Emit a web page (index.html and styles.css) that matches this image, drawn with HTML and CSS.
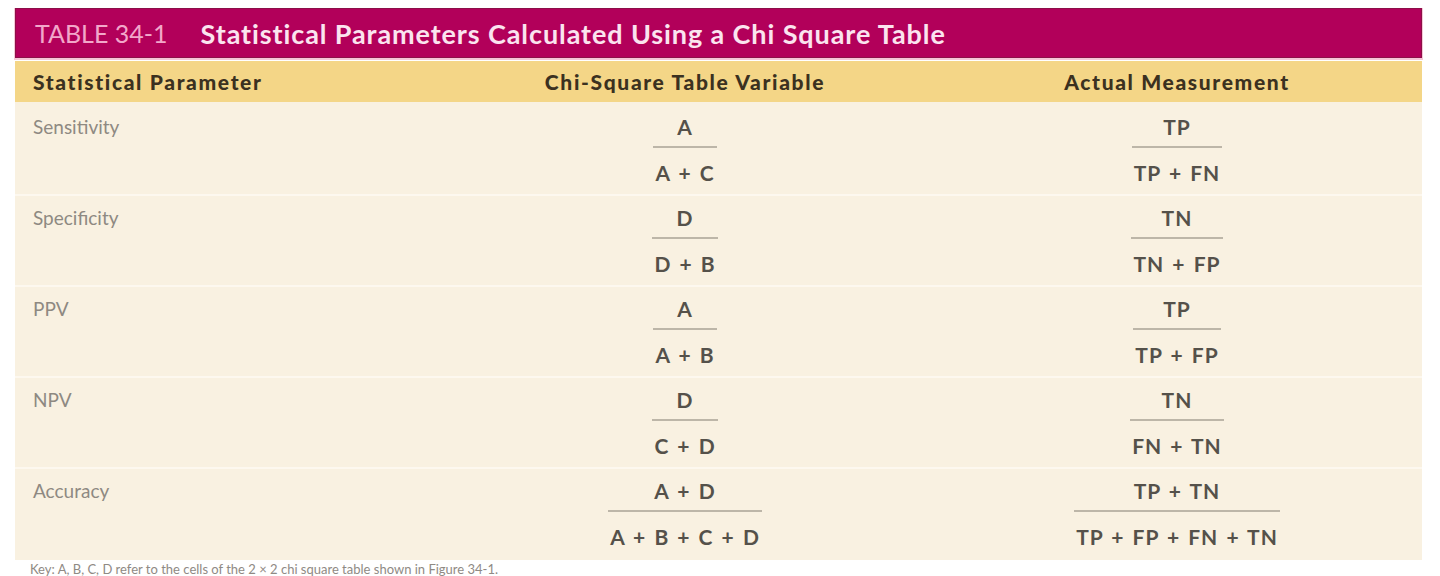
FILE: index.html
```html
<!DOCTYPE html>
<html>
<head>
<meta charset="utf-8">
<link rel="stylesheet" href="styles.css">
</head>
<body>
<div class="table">
  <div class="title-bar">
    <span class="table-no">TABLE 34-1</span>
    <span class="table-title">Statistical Parameters Calculated Using a Chi Square Table</span>
  </div>
  <div class="head-row">
    <div class="cell c1">Statistical Parameter</div>
    <div class="cell c2">Chi-Square Table Variable</div>
    <div class="cell c3">Actual Measurement</div>
  </div>
  <div class="body">
    <div class="row">
      <div class="cell c1 label">Sensitivity</div>
      <div class="cell c2"><div class="frac"><span class="num">A</span><span class="den">A + C</span></div></div>
      <div class="cell c3"><div class="frac"><span class="num">TP</span><span class="den">TP + FN</span></div></div>
    </div>
    <div class="row">
      <div class="cell c1 label">Specificity</div>
      <div class="cell c2"><div class="frac"><span class="num">D</span><span class="den">D + B</span></div></div>
      <div class="cell c3"><div class="frac"><span class="num">TN</span><span class="den">TN + FP</span></div></div>
    </div>
    <div class="row">
      <div class="cell c1 label">PPV</div>
      <div class="cell c2"><div class="frac"><span class="num">A</span><span class="den">A + B</span></div></div>
      <div class="cell c3"><div class="frac"><span class="num">TP</span><span class="den">TP + FP</span></div></div>
    </div>
    <div class="row">
      <div class="cell c1 label">NPV</div>
      <div class="cell c2"><div class="frac"><span class="num">D</span><span class="den">C + D</span></div></div>
      <div class="cell c3"><div class="frac"><span class="num">TN</span><span class="den">FN + TN</span></div></div>
    </div>
    <div class="row last">
      <div class="cell c1 label">Accuracy</div>
      <div class="cell c2"><div class="frac"><span class="num">A + D</span><span class="den">A + B + C + D</span></div></div>
      <div class="cell c3"><div class="frac"><span class="num">TP + TN</span><span class="den">TP + FP + FN + TN</span></div></div>
    </div>
  </div>
</div>
<p class="footnote">Key: A, B, C, D refer to the cells of the 2 × 2 chi square table shown in Figure 34-1.</p>
</body>
</html>
```

FILE: styles.css
```css
html, body {
  margin: 0;
  padding: 0;
  background: #ffffff;
}

body {
  font-family: Lato, "Open Sans", "DejaVu Sans", sans-serif;
  overflow: hidden;
  height: 576px;
}

.table {
  margin: 8px 0 0 15px;
  width: 1407px;
}

.title-bar {
  height: 50px;
  box-sizing: border-box;
  background: #b2005a;
  border: 1px solid #8c1048;
  box-shadow: 0 1px 0 1px #f6c6d6;
  display: flex;
  align-items: center;
  padding-left: 19px;
  gap: 33px;
  line-height: 1;
}

.table-no {
  color: #f2a7ca;
  font-size: 25px;
  font-weight: 400;
}

.table-title {
  color: #fbe4ef;
  font-size: 27px;
  font-weight: 700;
  letter-spacing: 0.9px;
}

.head-row {
  margin-top: 3px;
  height: 41px;
  background: #f4d687;
  display: grid;
  grid-template-columns: 423px 494px 490px;
  align-items: center;
  font-size: 21px;
  font-weight: 900;
  letter-spacing: 1.65px;
  color: #3b3120;
}

.head-row .c1 {
  padding-left: 18px;
}

.cell.c2, .cell.c3 {
  text-align: center;
}

.body {
  background: #f9f1e1;
  display: flex;
  flex-direction: column;
  padding-top: 3px;
}

.row {
  display: grid;
  grid-template-columns: 423px 494px 490px;
  height: 91px;
  box-sizing: border-box;
  padding-top: 10px;
  border-bottom: 2px solid #fdf8ef;
}

.row.last {
  border-bottom: none;
}

.label {
  padding-left: 18px;
  font-size: 19px;
  line-height: 24px;
  color: #8e8982;
  letter-spacing: 0;
}

.frac {
  display: inline-flex;
  flex-direction: column;
  align-items: stretch;
  font-size: 21px;
  font-weight: 700;
  color: #55514a;
  line-height: 24px;
  letter-spacing: 1px;
  word-spacing: 2px;
}

.num {
  text-align: center;
  padding-bottom: 7px;
}

.den {
  border-top: 2px solid #bdb6a8;
  padding-top: 13px;
  padding-left: 2px;
  padding-right: 2px;
  text-align: center;
}

.footnote {
  margin: 2px 0 0 30px;
  font-size: 13px;
  line-height: 14px;
  color: #8f8a84;
}
```
